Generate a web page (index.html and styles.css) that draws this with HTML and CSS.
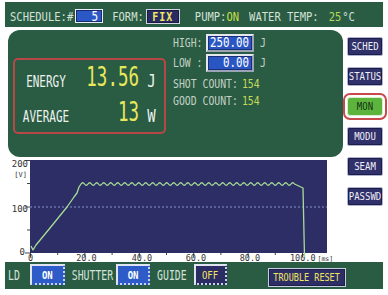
FILE: index.html
```html
<!DOCTYPE html>
<html>
<head>
  <meta charset="UTF-8">
  <title>Weld Monitor</title>
  <link rel="stylesheet" href="styles.css">
</head>
<body>
<div class="screen">

  <div class="topbar">
    <span class="tt">SCHEDULE:#</span>
    <span class="sched-box"><span class="tt">5</span></span>
    <span class="tt lbl-form">FORM:</span>
    <span class="fix-box"><span class="tt">FIX</span></span>
    <span class="tt lbl-pump">PUMP:<span class="hl">ON</span></span>
    <span class="tt lbl-temp">WATER TEMP:</span>
    <span class="tt temp-val">25</span>
    <span class="tt temp-unit">°C</span>
  </div>

  <div class="main">
    <div class="left">
      <div class="panel">
        <div class="energy-box">
          <span class="e-label">ENERGY</span>
          <span class="e-value">13.56</span>
          <span class="e-unit">J</span>
          <span class="e-label">AVERAGE</span>
          <span class="e-value">13</span>
          <span class="e-unit">W</span>
        </div>
        <div class="info">
          <div class="frow">
            <span class="f-label">HIGH:</span>
            <span class="f-box"><span class="ft">250.00</span></span>
            <span class="f-unit">J</span>
          </div>
          <div class="frow">
            <span class="f-label">LOW :</span>
            <span class="f-box"><span class="ft">0.00</span></span>
            <span class="f-unit">J</span>
          </div>
          <div class="crow first"><span class="ct">SHOT COUNT:</span><span class="ct num">154</span></div>
          <div class="crow"><span class="ct">GOOD COUNT:</span><span class="ct num">154</span></div>
        </div>
      </div>

      <svg class="chart" width="338" height="105" viewBox="0 0 338 105">
        <rect x="25" y="3" width="297" height="93" fill="#2e2e66"/>
        <line x1="25" y1="50" x2="322" y2="50" stroke="#8494cc" stroke-width="1" stroke-dasharray="2 2"/>
        <path d="M20 3.5H25M22 26.5H25M20 50H25M22 73H25M20 96H25" stroke="#444" stroke-width="1"/>
        <path d="M25.5 96V100M52.7 96V98M79.9 96V100M107.1 96V98M134.3 96V100M161.5 96V98M188.7 96V100M215.9 96V98M243.1 96V100M270.3 96V98M297.5 96V100" stroke="#444" stroke-width="1"/>
        <g font-family="DejaVu Sans Mono, monospace" font-size="9" fill="#333" text-anchor="end">
          <text x="23" y="10">200</text>
          <text x="22" y="19.5" font-size="7">[V]</text>
          <text x="23" y="55">100</text>
          <text x="20" y="98">0</text>
        </g>
        <g font-family="DejaVu Sans Mono, monospace" font-size="8.5" fill="#333" text-anchor="middle">
          <text x="25.5" y="104">0</text>
          <text x="81.5" y="104">20.0</text>
          <text x="137" y="104">40.0</text>
          <text x="191" y="104">60.0</text>
          <text x="245" y="104">80.0</text>
          <text x="310.5" y="104" text-anchor="end">100.0</text>
          <text x="312.5" y="104" font-size="6.5" text-anchor="start">[ms]</text>
        </g>
        <path fill="none" stroke="#a6dc96" stroke-width="1.3" stroke-linejoin="round"
          d="M26 89L28 93L31 88L45 71L62 50L69 40L72 36L74 30L76 27q1.75 -2.5 3.5 0t3.5 0t3.5 0t3.5 0t3.5 0t3.5 0t3.5 0t3.5 0t3.5 0t3.5 0t3.5 0t3.5 0t3.5 0t3.5 0t3.5 0t3.5 0t3.5 0t3.5 0t3.5 0t3.5 0t3.5 0t3.5 0t3.5 0t3.5 0t3.5 0t3.5 0t3.5 0t3.5 0t3.5 0t3.5 0t3.5 0t3.5 0t3.5 0t3.5 0t3.5 0t3.5 0t3.5 0t3.5 0t3.5 0t3.5 0t3.5 0t3.5 0t3.5 0t3.5 0t3.5 0t3.5 0t3.5 0t3.5 0t3.5 0t3.5 0t3.5 0t3.5 0t3.5 0t3.5 0t3.5 0t3.5 0t3.5 0t3.5 0t3.5 0t3.5 0t3.5 0L298 31L299.5 100"/>
      </svg>
    </div>

    <div class="side">
      <div class="btn"><span>SCHED</span></div>
      <div class="btn"><span>STATUS</span></div>
      <div class="btn on"><span>MON</span></div>
      <div class="btn"><span>MODU</span></div>
      <div class="btn"><span>SEAM</span></div>
      <div class="btn"><span>PASSWD</span></div>
    </div>
  </div>

  <div class="bottombar">
    <span class="b-label">LD</span>
    <span class="tgl ld"><span>ON</span></span>
    <span class="b-label shutter">SHUTTER</span>
    <span class="tgl sh"><span>ON</span></span>
    <span class="b-label guide">GUIDE</span>
    <span class="tgl off"><span>OFF</span></span>
    <span class="trb"><span>TROUBLE RESET</span></span>
  </div>

</div>
</body>
</html>
```

FILE: styles.css
```css
* {
  margin: 0;
  padding: 0;
  box-sizing: border-box;
}

body {
  background: #fff;
  font-family: "DejaVu Sans Mono", monospace;
}

.screen {
  width: 378px;
  margin: 2px 0 0 5px;
}

/* top status bar */
.topbar {
  height: 25px;
  background: #2a5c44;
  display: flex;
  align-items: center;
  padding: 3px 0 0 5px;
  color: #d4e2d8;
  font-size: 10.5px;
  line-height: 1;
}

.tt {
  display: inline-block;
  white-space: nowrap;
  transform: scaleY(1.2);
}

.sched-box {
  margin-left: 2px;
  width: 28px;
  height: 14px;
  background: #2c58c6;
  border: 1px solid #e8eef8;
  box-shadow: inset 0 0 0 1px #1a2a70;
  color: #fff;
  font-size: 11px;
  text-align: right;
  padding: 1px 4px 0 0;
}

.lbl-form { margin-left: 9px; }

.fix-box {
  margin-left: 2px;
  width: 34px;
  height: 15px;
  background: #2b2b63;
  border: 1px solid #d0d4e0;
  box-shadow: inset 0 0 0 1px #1b1b40;
  color: #f0e860;
  font-weight: bold;
  font-size: 10px;
  letter-spacing: 1px;
  text-align: center;
  padding-top: 2px;
}

.lbl-pump { margin-left: 15px; }
.hl { color: #c8e048; }
.lbl-temp { margin-left: 10px; }
.temp-val { margin-left: 10px; color: #b8d858; }
.temp-unit { margin-left: 1px; }

/* middle */
.main {
  display: grid;
  grid-template-columns: 338px 40px;
  height: 235px;
}

.panel {
  margin: 3px 0 0 3px;
  width: 335px;
  height: 127px;
  background: #2a5c44;
  border-radius: 12px;
  display: flex;
  align-items: flex-start;
  gap: 7px;
  padding: 4px 0 0 5px;
}

.energy-box {
  margin-top: 24px;
  width: 153px;
  height: 76px;
  border: 2px solid #b84848;
  border-radius: 5px;
  padding: 3px 0 0 3px;
  display: grid;
  grid-template-columns: 56px 65px 25px;
  grid-template-rows: 26px 35px;
  align-items: end;
  line-height: 1;
  color: #eef2ee;
}

.e-label {
  text-align: center;
  font-size: 11px;
  transform: scaleY(1.5);
  transform-origin: 50% 85%;
  white-space: nowrap;
}

.e-value {
  text-align: right;
  font-size: 17.5px;
  color: #e8e85a;
  transform: scaleY(1.55);
  transform-origin: 50% 85%;
}

.e-unit {
  text-align: center;
  font-size: 14px;
  transform: scaleY(1.2);
  transform-origin: 50% 85%;
}

.info {
  width: 170px;
  display: flex;
  flex-direction: column;
  color: #c4d2c6;
  font-size: 9.8px;
  line-height: 1;
}

.frow {
  display: flex;
  align-items: center;
  height: 18px;
  margin-bottom: 2px;
}

.f-label {
  width: 33px;
  white-space: pre;
  transform: scaleY(1.27);
}

.f-box {
  width: 48px;
  height: 18px;
  border: 2px solid;
  border-color: #e4e8ee #9aa4b4 #9aa4b4 #e4e8ee;
  background: #2a56c4;
  box-shadow: inset 0 0 0 1px #1b2f78;
  color: #fff;
  font-size: 10.8px;
  text-align: right;
  padding: 2px 3px 0 0;
}

.ft {
  display: inline-block;
  transform: scaleY(1.27);
}

.f-unit {
  margin-left: 6px;
  transform: scaleY(1.27);
}

.crow {
  height: 17px;
  display: flex;
  align-items: center;
}

.crow.first { margin-top: 1px; }

.ct {
  display: inline-block;
  white-space: nowrap;
  transform: scaleY(1.27);
}

.num {
  margin-left: 4px;
  color: #c8d858;
}

.chart { display: block; }

/* right column buttons */
.side {
  display: flex;
  flex-direction: column;
  gap: 11px;
  padding-top: 10px;
}

.btn {
  margin-left: 4px;
  width: 36px;
  height: 19px;
  background: #30306a;
  border: 1px solid #b0b4d0;
  border-radius: 2px;
  box-shadow: inset 0 0 0 1px #1c1c48;
  color: #f0f0f8;
  font-size: 9px;
  line-height: 1;
  display: flex;
  align-items: center;
  justify-content: center;
  white-space: nowrap;
}

.btn span {
  display: inline-block;
  transform: scaleY(1.25);
}

.btn.on {
  background: #5cb43c;
  color: #163218;
  border-color: #d8f0c8;
  box-shadow: none;
  outline: 2px solid #c84a4a;
  outline-offset: 2px;
  border-radius: 3px;
}

/* bottom bar */
.bottombar {
  height: 27px;
  background: #2a5c44;
  display: flex;
  align-items: center;
  padding-left: 3px;
  color: #d4e2d8;
  font-size: 9.8px;
  line-height: 1;
}

.b-label {
  display: inline-block;
  transform: scaleY(1.45);
  white-space: nowrap;
}

.b-label.shutter { margin-left: 7px; }
.b-label.guide { margin-left: 7px; }

.tgl {
  height: 21px;
  margin-top: -2px;
  border: 2px solid #dfe4f0;
  border-right-style: dotted;
  border-bottom-style: dotted;
  border-right-color: #c8d0e8;
  border-bottom-color: #c8d0e8;
  background: #2d5cc8;
  color: #fff;
  font-weight: bold;
  font-size: 9px;
  display: flex;
  align-items: center;
  justify-content: center;
  padding-top: 2px;
}

.tgl span {
  display: inline-block;
  transform: scaleY(1.2);
}

.tgl.ld { width: 35px; margin-left: 10px; }
.tgl.sh { width: 34px; margin-left: 3px; }
.tgl.off {
  width: 33px;
  margin-left: 7px;
  background: #2c2c64;
  color: #f0e860;
  font-weight: normal;
}

.trb {
  margin: 4px 0 0 41px;
  width: 78px;
  height: 19px;
  background: #2e2e66;
  border: 1px solid #c8cce0;
  box-shadow: inset 0 0 0 1px #1e1e48;
  color: #f0e860;
  font-size: 8.5px;
  display: flex;
  align-items: center;
  justify-content: center;
  white-space: nowrap;
}

.trb span {
  display: inline-block;
  transform: scaleY(1.3);
}
```
